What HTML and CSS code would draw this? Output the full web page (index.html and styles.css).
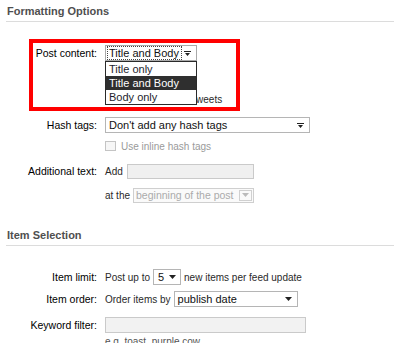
FILE: index.html
```html
<!DOCTYPE html>
<html lang="en">
<head>
    <meta charset="UTF-8">
    <title>Formatting Options</title>
    <link rel="stylesheet" href="styles.css">
</head>
<body>
<div class="page">
    <!--formatting-->
    <h2 class="section-title">Formatting Options</h2>
    <div class="highlight">
        <div class="row row-post">
            <label class="row-label">Post content:</label>
            <div class="row-field">
                <div class="select select-post">
                    <span class="select-value"><span class="focus-ring">Title and Body</span></span>
                    <svg class="select-arrow" width="7" height="5" viewBox="0 0 7 5"><path d="M0 0h7v1H0z M1 2h5L3.5 5z" fill="#222"/></svg>
                    <ul class="dropdown">
                        <li>Title only</li>
                        <li class="active">Title and Body</li>
                        <li>Body only</li>
                    </ul>
                </div>
            </div>
        </div>
        <div class="row row-hidden">
            <span class="row-label"></span>
            <div class="row-field">
                <span class="checkbox"></span><span class="field-text">Ignore common tweets</span>
            </div>
        </div>
    </div>
    <div class="row row-hash">
        <label class="row-label">Hash tags:</label>
        <div class="row-field">
            <div class="select select-hash">
                <span class="select-value">Don't add any hash tags</span>
                <svg class="select-arrow" width="7" height="5" viewBox="0 0 7 5"><path d="M0 0h7v1H0z M1 2h5L3.5 5z" fill="#222"/></svg>
            </div>
        </div>
    </div>
    <div class="row row-inline">
        <span class="row-label"></span>
        <div class="row-field">
            <span class="checkbox"></span><span class="field-text disabled">Use inline hash tags</span>
        </div>
    </div>
    <div class="row row-add">
        <label class="row-label">Additional text:</label>
        <div class="row-field">
            <span class="field-text">Add</span>
            <span class="text-input input-add"></span>
        </div>
    </div>
    <div class="row row-at">
        <span class="row-label"></span>
        <div class="row-field">
            <span class="field-text">at the</span>
            <div class="select select-at disabled">
                <span class="select-value">beginning of the post</span>
                <span class="arrow-box"><svg width="7" height="4" viewBox="0 0 7 4"><path d="M0 0h7L3.5 4z" fill="#bbb"/></svg></span>
            </div>
        </div>
    </div>

    <!--item selection-->
    <h2 class="section-title section-items">Item Selection</h2>
    <div class="row row-limit">
        <label class="row-label">Item limit:</label>
        <div class="row-field">
            <span class="field-text">Post up to</span>
            <div class="select select-limit">
                <span class="select-value">5</span>
                <svg class="select-arrow" width="7" height="4" viewBox="0 0 7 4"><path d="M0 0h7L3.5 4z" fill="#222"/></svg>
            </div>
            <span class="field-text">new items per feed update</span>
        </div>
    </div>
    <div class="row row-order">
        <label class="row-label">Item order:</label>
        <div class="row-field">
            <span class="field-text">Order items by</span>
            <div class="select select-order">
                <span class="select-value">publish date</span>
                <svg class="select-arrow" width="7" height="4" viewBox="0 0 7 4"><path d="M0 0h7L3.5 4z" fill="#222"/></svg>
            </div>
        </div>
    </div>
    <div class="row row-keyword">
        <label class="row-label">Keyword filter:</label>
        <div class="row-field">
            <span class="text-input input-keyword"></span>
        </div>
    </div>
    <div class="row row-hint">
        <span class="row-label"></span>
        <div class="row-field">
            <span class="hint">e.g. toast, purple cow</span>
        </div>
    </div>
</div>
</body>
</html>
```

FILE: styles.css
```css
body{
    margin: 0;
    font-family: "Liberation Sans", Arial, Helvetica, sans-serif;
    background-color: #fff;
    color: #222;
}
.page{
    padding: 0 6px;
}
.section-title{
    margin: 0;
    padding: 5px 1px 3px;
    font-size: 11px;
    line-height: 13px;
    font-weight: bold;
    color: #4f4f4f;
    border-bottom: 1px solid #dcdcdc;
}
.section-items{
    margin-top: 21px;
}
/*red annotation box*/
.highlight{
    margin: 17px 0 0 23px;
    width: 211px;
    box-sizing: border-box;
    border: 4px solid #f00;
    padding: 2px 0 1px;
}
.row{
    display: grid;
    grid-template-columns: 91px 1fr;
    column-gap: 8px;
    align-items: center;
    height: 16px;
    margin-top: 6px;
}
.highlight .row{
    grid-template-columns: 64px 1fr;
}
.highlight .row-post{
    margin-top: 0;
}
.highlight .row-hidden{
    margin-top: 31px;
    height: 14px;
}
.row-inline{
    height: 14px;
}
.row-add{
    margin-top: 10px;
}
.row-at{
    margin-top: 8px;
}
.row-limit{
    margin-top: 23px;
}
.row-keyword{
    margin-top: 10px;
}
.row-hint{
    margin-top: 2px;
    height: 13px;
}
.row-label{
    text-align: right;
    font-size: 10.5px;
    color: #000;
    white-space: nowrap;
}
.row-field{
    display: flex;
    align-items: center;
    gap: 3px;
    min-width: 0;
}
.field-text{
    font-size: 10px;
    color: #2a2a2a;
    white-space: nowrap;
}
.field-text.disabled{
    color: #9a9a9a;
}
.hint{
    font-size: 10px;
    color: #555;
}
.checkbox{
    width: 11px;
    height: 10px;
    box-sizing: border-box;
    border: 1px solid #c4c4c4;
    background-color: #f6f6f6;
    margin-right: 2px;
}
/*selects*/
.select{
    position: relative;
    display: flex;
    align-items: center;
    height: 16px;
    box-sizing: border-box;
    border: 1px solid #b5b5b5;
    background-color: #fff;
    font-size: 11px;
    color: #111;
    padding-left: 3px;
    white-space: nowrap;
}
.select-value{
    flex: 1;
    min-width: 0;
}
.select-arrow{
    flex: none;
    margin: 0 5px 0 3px;
}
.select-post{
    width: 92px;
    padding-left: 1px;
    border-color: #a9a9a9;
}
.focus-ring{
    display: inline-block;
    border: 1px dotted #444;
    padding: 0 2px 0 1px;
    line-height: 12px;
}
.select-hash{
    width: 205px;
}
.select-at{
    width: 121px;
    height: 15px;
    padding-left: 2px;
    font-size: 10.5px;
}
.select.disabled{
    border-color: #cfcfcf;
    color: #ababab;
    background-color: #fafafa;
}
.arrow-box{
    flex: none;
    display: flex;
    align-items: center;
    justify-content: center;
    width: 13px;
    height: 11px;
    box-sizing: border-box;
    border: 1px solid #d0d0d0;
    margin-right: 1px;
}
.select-limit{
    width: 28px;
    padding-left: 4px;
}
.select-limit .select-arrow{
    margin-right: 4px;
}
.select-order{
    width: 124px;
}
/*open dropdown list*/
.dropdown{
    position: absolute;
    left: -1px;
    top: 15px;
    width: 92px;
    box-sizing: border-box;
    margin: 0;
    padding: 0;
    list-style: none;
    border: 1px solid #2a2a2a;
    background-color: #fff;
    z-index: 2;
}
.dropdown li{
    height: 14px;
    line-height: 14px;
    padding-left: 3px;
    color: #1e1e2e;
}
.dropdown li.active{
    background-color: #2f2f2f;
    color: #fff;
}
/*text inputs*/
.text-input{
    display: block;
    height: 15px;
    box-sizing: border-box;
    border: 1px solid #cacaca;
    background-color: #f0f0f0;
}
.input-add{
    width: 127px;
    margin-left: 1px;
}
.input-keyword{
    width: 201px;
    height: 16px;
    background-color: #f2f2f2;
}
```
